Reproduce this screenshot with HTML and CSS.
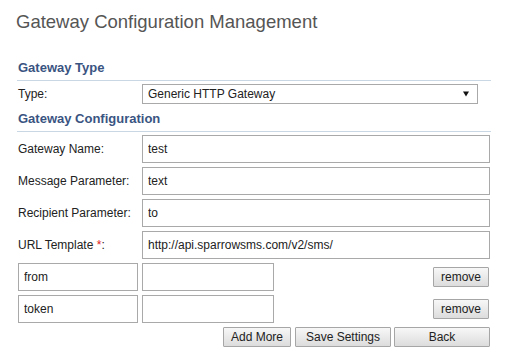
FILE: index.html
```html
<!DOCTYPE html>
<html lang="en">
<head>
    <meta charset="UTF-8">
    <title>Gateway Configuration Management</title>
    <link rel="stylesheet" href="styles.css">
</head>
<body>
    <h1 class="page-title">Gateway Configuration Management</h1>
    <form class="config-form">
        <h2 class="section-title">Gateway Type</h2>
        <div class="form-row">
            <label class="field-label">Type:</label>
            <div class="select-wrap">
                <select class="field-select">
                    <option>Generic HTTP Gateway</option>
                </select>
                <svg class="select-arrow" width="6" height="6" viewBox="0 0 6 6"><path d="M0 0.5 H6 L3 5.5 Z" fill="#111"/></svg>
            </div>
        </div>
        <h2 class="section-title section-title-config">Gateway Configuration</h2>
        <div class="form-rows">
            <div class="form-row">
                <label class="field-label">Gateway Name:</label>
                <input class="field-input" type="text" value="test">
            </div>
            <div class="form-row">
                <label class="field-label">Message Parameter:</label>
                <input class="field-input" type="text" value="text">
            </div>
            <div class="form-row">
                <label class="field-label">Recipient Parameter:</label>
                <input class="field-input" type="text" value="to">
            </div>
            <div class="form-row">
                <label class="field-label">URL Template <span class="required">*</span>:</label>
                <input class="field-input" type="text" value="http://api.sparrowsms.com/v2/sms/">
            </div>
            <div class="param-row">
                <input class="field-input param-name" type="text" value="from">
                <input class="field-input param-value" type="text" value="">
                <button class="btn btn-remove" type="button">remove</button>
            </div>
            <div class="param-row">
                <input class="field-input param-name" type="text" value="token">
                <input class="field-input param-value" type="text" value="">
                <button class="btn btn-remove" type="button">remove</button>
            </div>
            <div class="actions">
                <button class="btn btn-add" type="button">Add More</button>
                <button class="btn btn-wide" type="button">Save Settings</button>
                <button class="btn btn-wide" type="button">Back</button>
            </div>
        </div>
    </form>
</body>
</html>
```

FILE: styles.css
```css
body, html {
    margin: 0;
    padding: 0;
    background-color: #fff;
    font-family: "Liberation Sans", Arial, sans-serif;
    font-size: 12px;
    color: #222;
}
.page-title {
    margin: 0;
    padding: 11px 0 0 16px;
    font-size: 18.5px;
    line-height: 22px;
    font-weight: normal;
    color: #555;
}
.config-form {
    width: 474px;
    margin: 27px 0 0 17px;
}
.section-title {
    margin: 0;
    padding: 0 1px 4px;
    font-size: 13px;
    line-height: 16px;
    font-weight: bold;
    color: #3a5482;
    border-bottom: 1px solid #c9d6e3;
}
.section-title-config {
    margin-top: 7px;
}
.form-row {
    display: flex;
    align-items: center;
    gap: 4px;
    padding: 0 1px;
}
.section-title + .form-row {
    margin-top: 3px;
}
.form-rows {
    display: flex;
    flex-direction: column;
    gap: 4px;
    margin-top: 3px;
}
.field-label {
    width: 120px;
    line-height: 14px;
}
.required {
    color: #e02020;
}
.select-wrap {
    position: relative;
    width: 336px;
    height: 20px;
}
.field-select {
    appearance: none;
    -webkit-appearance: none;
    width: 100%;
    height: 20px;
    margin: 0;
    padding: 0 20px 0 5px;
    border: 1px solid #a9a9a9;
    border-radius: 0;
    background: #fff;
    font-family: inherit;
    font-size: 12px;
    color: #222;
}
.select-arrow {
    position: absolute;
    right: 9px;
    top: 7px;
}
.field-input {
    box-sizing: border-box;
    width: 348px;
    height: 28px;
    margin: 0;
    padding: 0 5px;
    border: 1px solid #a9a9a9;
    border-radius: 0;
    font-family: inherit;
    font-size: 12px;
    color: #222;
}
.param-row {
    display: flex;
    align-items: center;
    gap: 4px;
    padding: 0 1px;
}
.param-name {
    width: 120px;
}
.param-value {
    width: 132px;
}
.btn {
    box-sizing: border-box;
    height: 20px;
    margin: 0;
    padding: 0;
    border: 1px solid #a6a6a6;
    border-radius: 1px;
    background: linear-gradient(#f7f7f7, #dcdcdc);
    font-family: inherit;
    font-size: 12px;
    color: #222;
    white-space: nowrap;
}
.btn-remove {
    margin-left: auto;
    margin-right: 1px;
    width: 56px;
}
.actions {
    display: flex;
    justify-content: flex-end;
    gap: 3px;
    padding: 0 1px;
}
.btn-add {
    width: 68px;
    margin-right: 1px;
}
.btn-wide {
    width: 96px;
}
```
